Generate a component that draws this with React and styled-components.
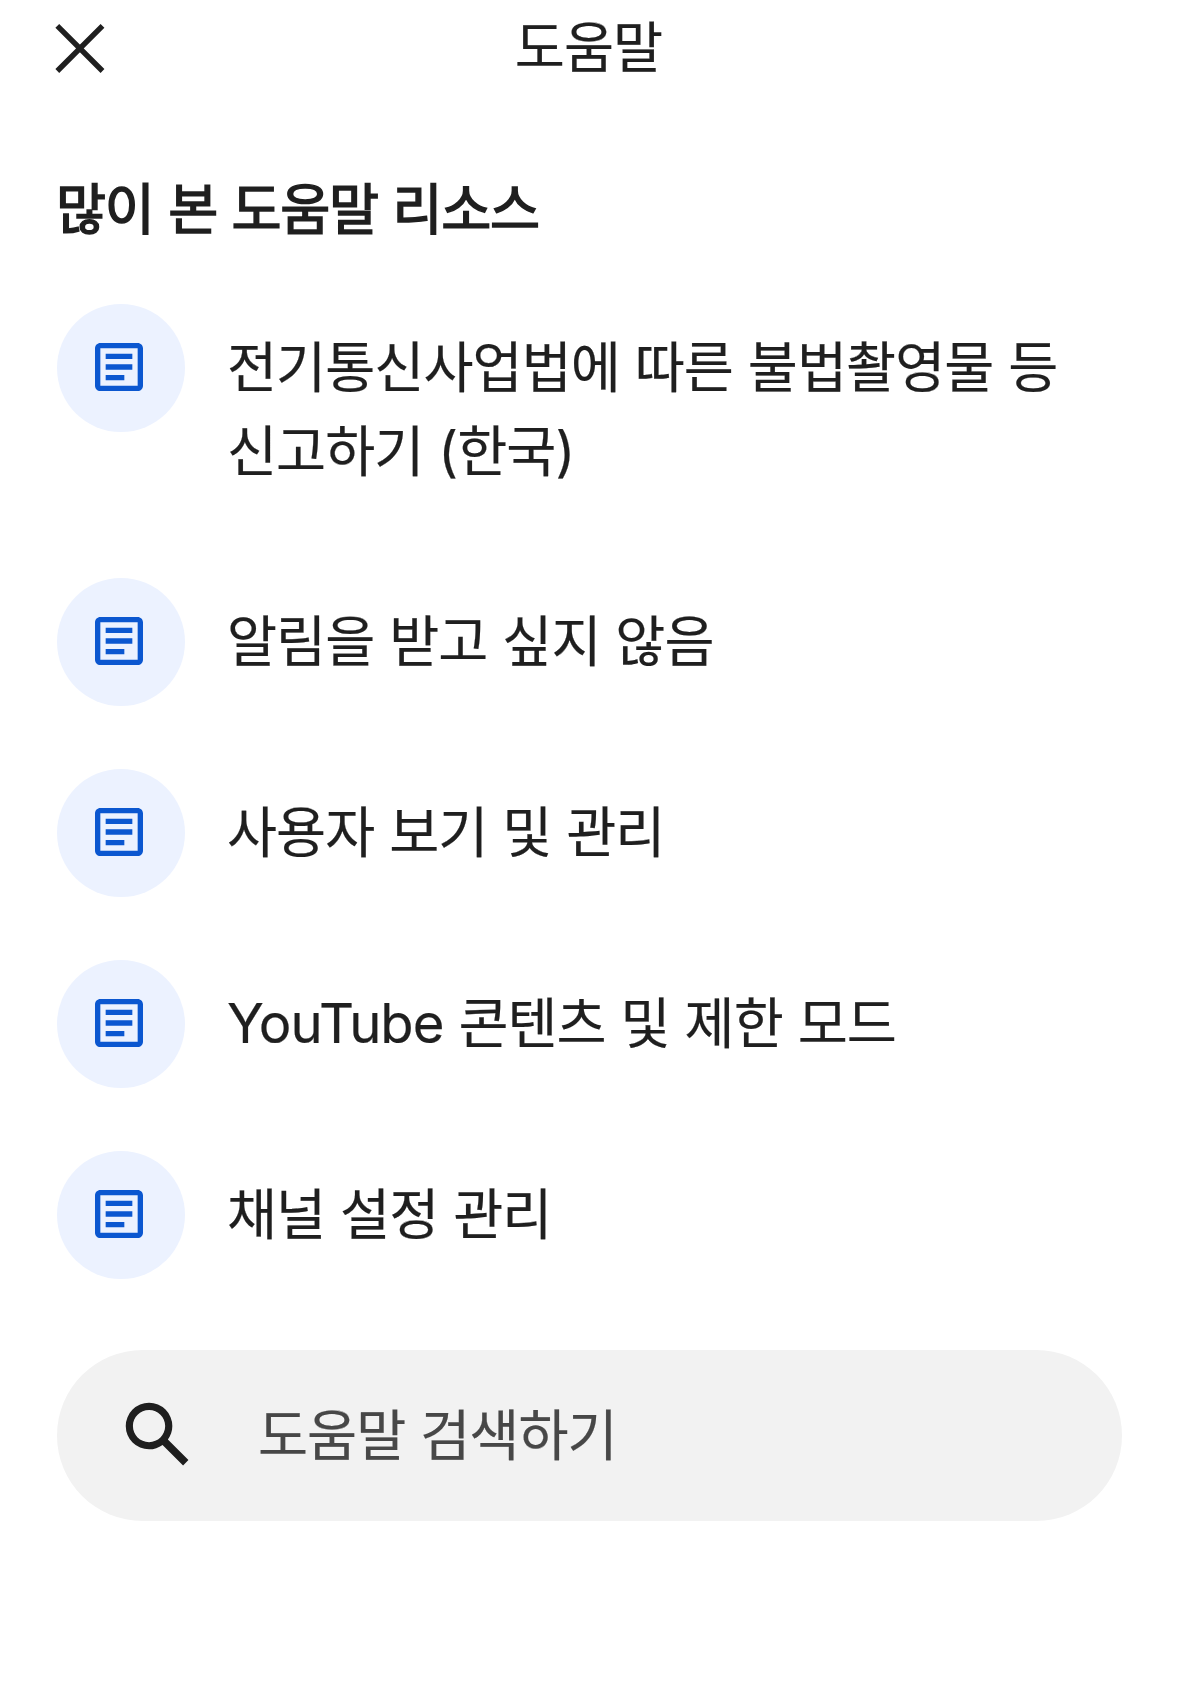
import React from "react";
import styled, { createGlobalStyle } from "styled-components";

const articles = [
  "전기통신사업법에 따른 불법촬영물 등 신고하기 (한국)",
  "알림을 받고 싶지 않음",
  "사용자 보기 및 관리",
  "YouTube 콘텐츠 및 제한 모드",
  "채널 설정 관리",
];

function CloseIcon() {
  return (
    <svg width="50" height="50" viewBox="0 0 50 50" fill="none" stroke="#1f1f1f" strokeWidth="5.4">
      <path d="M2.3 2.8L47.5 48M47.5 2.8L2.3 48" />
    </svg>
  );
}

function ArticleIcon() {
  return (
    <svg width="64" height="64" viewBox="0 0 24 24" fill="#0b57d0">
      <path d="M19 5v14H5V5h14m0-2H5c-1.1 0-2 .9-2 2v14c0 1.1.9 2 2 2h14c1.1 0 2-.9 2-2V5c0-1.1-.9-2-2-2z" />
      <path d="M14 17H7v-2h7v2zm3-4H7v-2h10v2zm0-4H7V7h10v2z" />
    </svg>
  );
}

function SearchIcon() {
  return (
    <svg width="86" height="86" viewBox="0 0 24 24" fill="#1f1f1f">
      <path d="M20.49 19l-5.73-5.73C15.53 12.2 16 10.91 16 9.5A6.5 6.5 0 1 0 9.5 16c1.41 0 2.7-.47 3.77-1.24L19 20.49 20.49 19zM5 9.5C5 7.01 7.01 5 9.5 5S14 7.01 14 9.5 11.99 14 9.5 14 5 11.99 5 9.5z" />
    </svg>
  );
}

export default function App() {
  return (
    <>
      <GlobalStyle />
      <Panel>
        <Header>
          <CloseButton aria-label="닫기">
            <CloseIcon />
          </CloseButton>
          <Title>도움말</Title>
        </Header>
        <SectionTitle>많이 본 도움말 리소스</SectionTitle>
        <List>
          {articles.map((title) => (
            <Item key={title}>
              <IconCircle>
                <ArticleIcon />
              </IconCircle>
              <ItemText>{title}</ItemText>
            </Item>
          ))}
        </List>
        <SearchBar>
          <SearchIcon />
          <SearchInput placeholder="도움말 검색하기" />
        </SearchBar>
      </Panel>
    </>
  );
}

const GlobalStyle = createGlobalStyle`
  * {
    box-sizing: border-box;
  }
  body {
    margin: 0;
    background: #fff;
    color: #1f1f1f;
    font-family: Inter, "Noto Sans CJK KR", sans-serif;
    font-size: 54.4px;
    letter-spacing: -0.93px;
    word-spacing: 0.5px;
    -webkit-text-stroke-width: 0.2px;
  }
  svg {
    display: block;
    flex-shrink: 0;
  }
`;

const Panel = styled.main`
  min-height: 1686px;
  padding: 0 57px;
`;

const Header = styled.header`
  display: grid;
  grid-template-columns: 50px 1fr 50px;
  align-items: center;
  height: 96px;
  margin-left: -2px;
`;

const CloseButton = styled.button`
  padding: 0;
  border: 0;
  background: none;
`;

const Title = styled.h1`
  margin: 0 0 2px;
  font-size: inherit;
  font-weight: 400;
  line-height: 84px;
  text-align: center;
`;

const SectionTitle = styled.h2`
  margin: 71px 0 0 -1px;
  font-size: inherit;
  font-weight: 400;
  line-height: 84px;
  letter-spacing: -1.25px;
  -webkit-text-stroke-width: 1.6px;
`;

const List = styled.ul`
  display: flex;
  flex-direction: column;
  gap: 63px;
  margin: 53px 0 71px;
  padding: 0;
  list-style: none;
`;

const Item = styled.li`
  display: flex;
  gap: 42px;
`;

const IconCircle = styled.div`
  flex-shrink: 0;
  width: 128px;
  height: 128px;
  padding: 31px 0 0 30px;
  border-radius: 50%;
  background: #ecf2ff;
`;

const ItemText = styled.div`
  width: 850px;
  padding: 21px 0 22px;
  line-height: 84px;
  word-break: keep-all;
`;

const SearchBar = styled.div`
  display: flex;
  align-items: center;
  gap: 57px;
  height: 171px;
  padding: 0 58px 2px;
  border-radius: 86px;
  background: #f2f2f2;
`;

const SearchInput = styled.input`
  flex: 1;
  min-width: 0;
  height: 84px;
  padding: 0;
  border: 0;
  outline: 0;
  background: none;
  color: #1f1f1f;
  font: inherit;
  letter-spacing: inherit;
  word-spacing: inherit;

  &::placeholder {
    color: #474747;
    opacity: 1;
  }
`;
